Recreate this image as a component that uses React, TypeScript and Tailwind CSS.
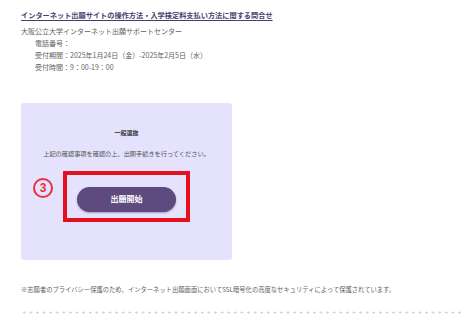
export default function App() {
  const jp = "font-['Noto_Sans_CJK_JP','Noto_Sans',sans-serif]"

  return (
    <div className={`${jp} w-[473px] h-[328px] bg-white px-[21px] pt-[9px] overflow-hidden`}>
      <p className="text-[7.2px] leading-[12px] font-bold text-[#4a3d6e] underline underline-offset-[1.5px]">
        インターネット出願サイトの操作方法・入学検定料支払い方法に関する問合せ
      </p>

      <div className="mt-[4px] text-[7px] leading-[12px] text-[#5f5f5f]">
        <p>大阪公立大学インターネット出願サポートセンター</p>
        <div className="pl-[14px]">
          <p>電話番号：</p>
          <p>受付期間：2025年1月24日（金）-2025年2月5日（水）</p>
          <p>受付時間：9：00-19：00</p>
        </div>
      </div>

      <div className="relative mt-[30px] w-[211px] h-[157px] bg-[#e4e2fc] rounded-[3px] flex flex-col items-center pt-[25px]">
        <p className="text-[6px] leading-[10px] font-bold text-[#333]">一般選抜</p>
        <p className="mt-[11px] text-[6.2px] leading-[10px] text-[#555]">
          上記の確認事項を確認の上、出願手続きを行ってください。
        </p>

        <div className="mt-[12px] w-[127px] h-[51px] border-[4px] border-[#e60f1e] px-[10px] pt-[8px]">
          <button className="w-[99px] h-[25px] rounded-full bg-[#5e4a7e] text-white text-[8px] font-bold shadow-[0_1px_2px_rgba(0,0,0,0.3)]">
            出願開始
          </button>
        </div>

        <span className="absolute left-[12px] top-[75px] w-[20px] h-[20px] rounded-full border-[2.5px] border-[#e8303d] flex items-center justify-center text-[12px] leading-none font-bold text-[#e8303d] font-['Liberation_Sans',sans-serif]">
          3
        </span>
      </div>

      <p className="mt-[25px] text-[6.3px] leading-[10px] text-[#5f5f5f] whitespace-nowrap">
        ※志願者のプライバシー保護のため、インターネット出願画面においてSSL暗号化の高度なセキュリティによって保護されています。
      </p>

      <div className="mt-[16px] w-[442px] h-[3px] bg-[radial-gradient(circle,#c8c8c8_0.8px,transparent_1.3px)] bg-[length:6.6px_3px] bg-repeat-x" />
    </div>
  )
}
